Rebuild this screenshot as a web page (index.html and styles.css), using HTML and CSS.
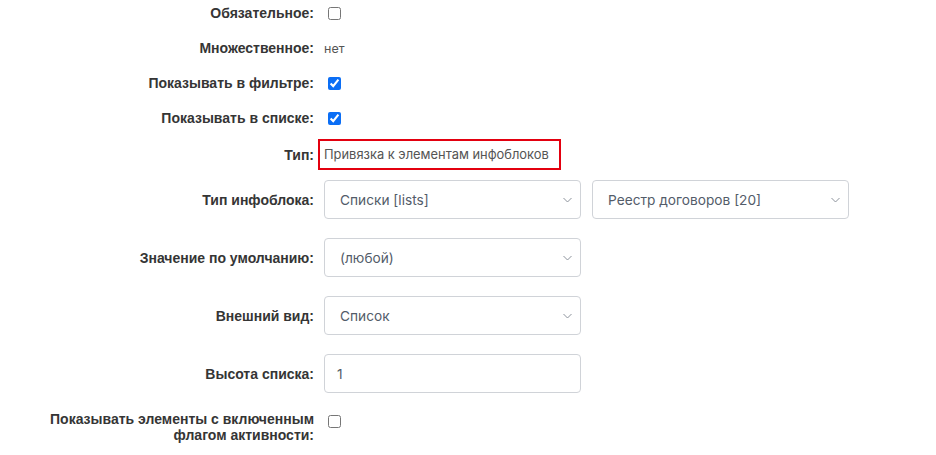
FILE: index.html
```html
<!DOCTYPE html>
<html lang="ru">
<head>
<meta charset="utf-8">
<link rel="stylesheet" href="styles.css">
</head>
<body>
<div class="form">
  <div class="row row-check">
    <div class="label">Обязательное:</div>
    <div class="value"><input type="checkbox" class="cb"></div>
  </div>
  <div class="row row-check">
    <div class="label">Множественное:</div>
    <div class="value"><span class="plain">нет</span></div>
  </div>
  <div class="row row-check">
    <div class="label">Показывать в фильтре:</div>
    <div class="value"><input type="checkbox" class="cb" checked></div>
  </div>
  <div class="row row-check">
    <div class="label">Показывать в списке:</div>
    <div class="value"><input type="checkbox" class="cb" checked></div>
  </div>
  <div class="row row-type">
    <div class="label">Тип:</div>
    <div class="value"><span class="type-box">Привязка к элементам инфоблоков</span></div>
  </div>
  <div class="row row-field row-first-field">
    <div class="label">Тип инфоблока:</div>
    <div class="value">
      <div class="select"><span class="select-text">Списки [lists]</span><svg class="chev" width="9" height="6" viewBox="0 0 9 6"><path d="M0.5 1l4 4 4-4" fill="none" stroke="#8d939c" stroke-width="1"/></svg></div>
      <div class="select"><span class="select-text">Реестр договоров [20]</span><svg class="chev" width="9" height="6" viewBox="0 0 9 6"><path d="M0.5 1l4 4 4-4" fill="none" stroke="#8d939c" stroke-width="1"/></svg></div>
    </div>
  </div>
  <div class="row row-field">
    <div class="label">Значение по умолчанию:</div>
    <div class="value">
      <div class="select"><span class="select-text">(любой)</span><svg class="chev" width="9" height="6" viewBox="0 0 9 6"><path d="M0.5 1l4 4 4-4" fill="none" stroke="#8d939c" stroke-width="1"/></svg></div>
    </div>
  </div>
  <div class="row row-field">
    <div class="label">Внешний вид:</div>
    <div class="value">
      <div class="select"><span class="select-text">Список</span><svg class="chev" width="9" height="6" viewBox="0 0 9 6"><path d="M0.5 1l4 4 4-4" fill="none" stroke="#8d939c" stroke-width="1"/></svg></div>
    </div>
  </div>
  <div class="row row-field">
    <div class="label">Высота списка:</div>
    <div class="value">
      <div class="input"><span class="select-text">1</span></div>
    </div>
  </div>
  <div class="row row-last">
    <div class="label">Показывать элементы с включенным<br>флагом активности:</div>
    <div class="value"><input type="checkbox" class="cb cb-top"></div>
  </div>
</div>
</body>
</html>
```
FILE: styles.css
```css
html, body {
  margin: 0;
  padding: 0;
  background: #ffffff;
}

body {
  font-family: "Liberation Sans", Arial, sans-serif;
  color: #333333;
}

.form {
  display: flex;
  flex-direction: column;
  width: 936px;
}

.row {
  display: flex;
  align-items: center;
}

.label {
  width: 314px;
  flex: none;
  text-align: right;
  font-weight: bold;
  font-size: 14px;
  line-height: 16px;
  color: #353535;
  padding-right: 10px;
}

.value {
  display: flex;
  align-items: center;
  gap: 11px;
}

.row-check {
  height: 26px;
  margin-bottom: 9px;
}

.row-type {
  height: 31px;
  margin-top: -1px;
}

.row-field {
  height: 39px;
  margin-top: 19px;
}

.row-first-field {
  margin-top: 10px;
}

.row-last {
  align-items: flex-start;
  margin-top: 18px;
}

.cb {
  width: 13px;
  height: 13px;
  margin: 0 0 0 4px;
  accent-color: #0b6ef5;
}

.cb-top {
  margin-top: 4px;
}

.plain {
  font-family: Inter, "Liberation Sans", sans-serif;
  font-size: 12.5px;
  color: #555;
}

.type-box {
  box-sizing: border-box;
  flex: none;
  white-space: nowrap;
  margin-left: -6px;
  width: 243px;
  height: 31px;
  display: flex;
  align-items: center;
  padding: 0 0 0 4px;
  border: 2px solid #e3000f;
  font-family: Inter, "Liberation Sans", sans-serif;
  font-size: 12.9px;
  color: #555;
}

.select, .input {
  box-sizing: border-box;
  width: 257px;
  height: 39px;
  border: 1px solid #d0d3d8;
  border-radius: 4px;
  display: flex;
  align-items: center;
  justify-content: space-between;
  padding: 0 8px 0 15px;
  background: #fff;
}

.input {
  padding-left: 12px;
}

.select-text {
  font-family: Inter, "Liberation Sans", sans-serif;
  font-size: 13.7px;
  color: #535c69;
}

.chev {
  flex: none;
}
```
